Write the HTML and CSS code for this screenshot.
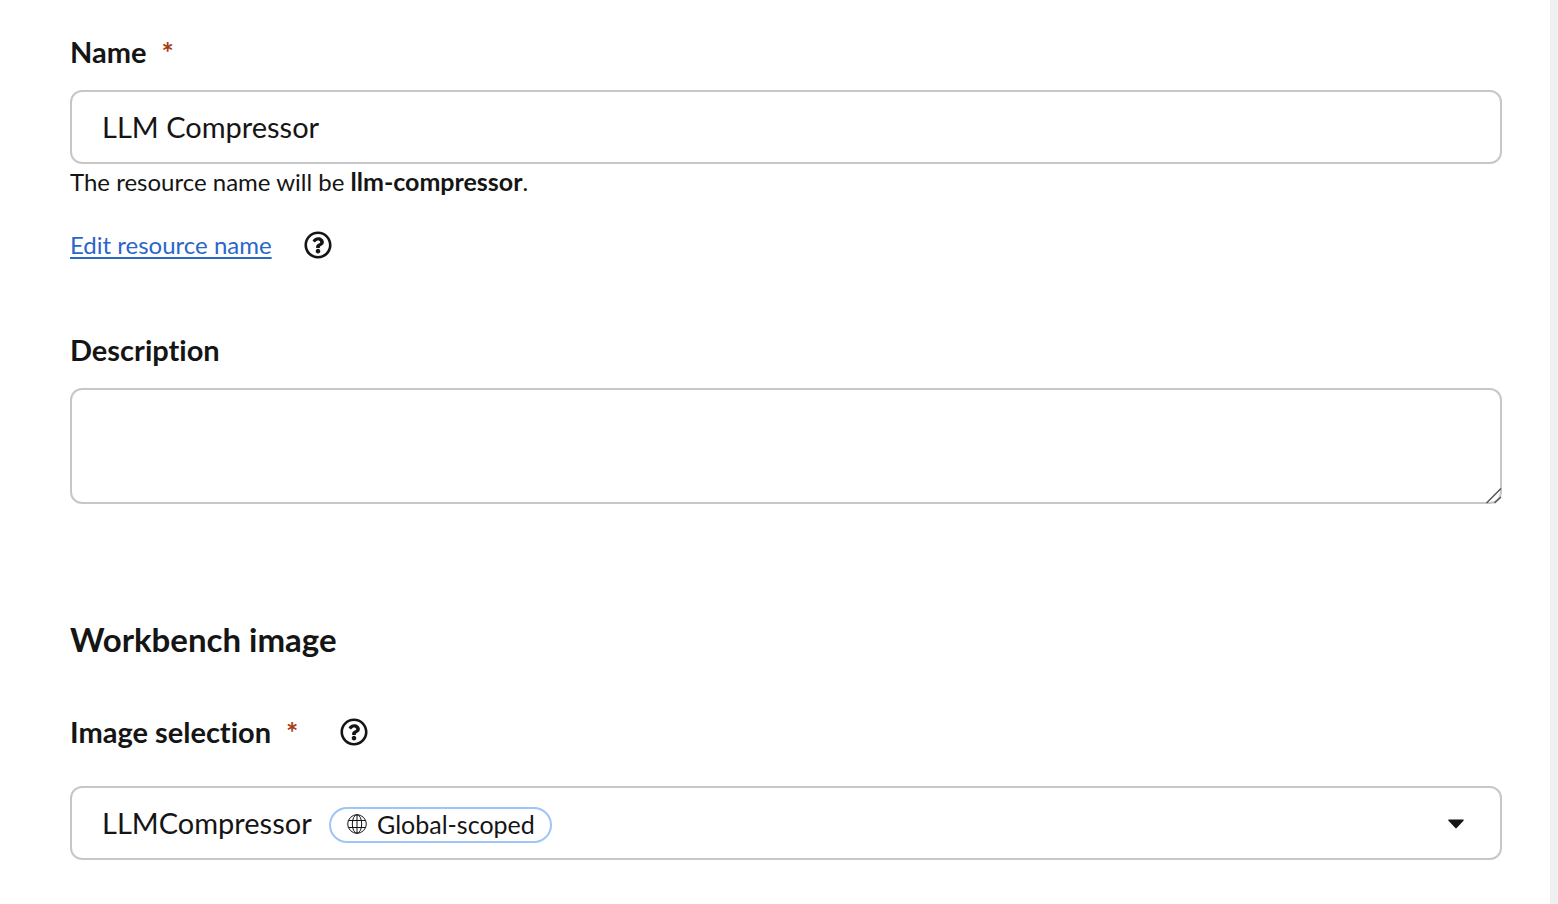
FILE: index.html
```html
<!DOCTYPE html>
<html lang="en">
<head>
<meta charset="utf-8">
<title>Workbench</title>
<link rel="stylesheet" href="styles.css">
</head>
<body>
<svg class="sprite" aria-hidden="true">
  <symbol id="icon-help" viewBox="0 0 512 512">
    <path fill="currentColor" d="M256 8C119 8 8 119.100 8 256c0 137 111 248 248 248s248-111 248-248C504 119.100 393 8 256 8zm0 448c-110.500 0-200-89.400-200-200 0-110.500 89.500-200 200-200 110.500 0 200 89.500 200 200 0 110.500-89.400 200-200 200zm107.200-255.200c0 67.100-72.400 68.100-72.400 92.900V300c0 6.600-5.400 12-12 12h-45.600c-6.600 0-12-5.400-12-12v-8.700c0-35.700 27.100-50 47.600-61.500 17.600-9.800 28.300-16.500 28.300-29.600 0-17.200-22-28.700-39.800-28.700-23.200 0-33.900 11-48.900 30-4.100 5.100-11.500 6.100-16.700 2.100l-27.800-21.100c-5.100-3.900-6.300-11.100-2.600-16.400C184.800 131.500 214.900 112 261.800 112c49 0 101.500 38.300 101.500 88.800zM298 368c0 23.200-18.800 42-42 42s-42-18.800-42-42 18.800-42 42-42 42 18.800 42 42z"/>
  </symbol>
</svg>
<main class="page">
  <form class="form">
    <div class="field">
      <label class="label" for="name">Name <span class="required">*</span></label>
      <input class="control" id="name" type="text" value="LLM Compressor" required>
      <p class="helper">The resource name will be <b class="resource">llm-compressor</b>.</p>
      <div class="edit-row">
        <a class="link" href="#resource-name">Edit resource name</a>
        <button class="help" type="button" aria-label="Resource name help"><svg><use href="#icon-help"/></svg></button>
      </div>
    </div>
    <div class="field">
      <label class="label" for="description">Description</label>
      <div class="textarea-wrap">
        <textarea class="control textarea" id="description"></textarea>
        <svg class="grip" viewBox="0 0 16 16" aria-hidden="true"><path d="M.5 15 15 .5M8.500 15 15 9"/></svg>
      </div>
    </div>
    <section class="section">
      <h2 class="heading">Workbench image</h2>
      <div class="label-row">
        <label class="label" for="image">Image selection <span class="required">*</span></label>
        <button class="help" type="button" aria-label="Image selection help"><svg><use href="#icon-help"/></svg></button>
      </div>
      <div class="select-wrap">
        <select class="control select" id="image"><option>LLMCompressor</option></select>
        <span class="badge">
          <svg class="globe" viewBox="0 0 20 20" aria-hidden="true"><circle cx="10" cy="10" r="9.300"/><ellipse cx="10" cy="10" rx="4.700" ry="9.300"/><path d="M10 .7v18.600M1.500 6.500h17M1.500 13.500h17"/></svg>
          Global-scoped
        </span>
        <svg class="caret" viewBox="0 0 16 10" aria-hidden="true"><path d="M.8.500h14.400q1 .3.300 1.200L8.700 9q-.7.700-1.400 0L.5 1.700Q-.2.800.8.500z"/></svg>
      </div>
    </section>
  </form>
</main>
</body>
</html>
```
FILE: styles.css
```css
* { box-sizing: border-box; }

body {
  margin: 0;
  background: #fff;
  color: #151515;
  font-family: Lato, "Noto Sans", sans-serif;
  font-size: 29px;
  font-variant-ligatures: none;
  line-height: 36px;
}

.sprite { position: absolute; width: 0; height: 0; }

.page {
  min-height: 100vh;
  padding: 34px 48px 44px 70px;
  border-right: 8px solid #f0f0f0;
}

.form, .field, .section { display: flex; flex-direction: column; }
.form { gap: 69px; }

.label { font-weight: 700; }
.required { margin-left: 8px; color: #a63c15; }

.control {
  display: block;
  width: 100%;
  height: 74px;
  margin: 0;
  padding: 0 30px 2px;
  border: 2px solid #c7c7c7;
  border-radius: 12px;
  background: #fff;
  color: inherit;
  font: inherit;
}

.field > .control, .textarea-wrap { margin-top: 20px; }

.helper { margin: 0; font-size: 24px; line-height: 34px; }
.resource { font-size: 25px; }

.edit-row, .label-row { display: flex; align-items: center; }
.edit-row { gap: 32px; margin-top: 28px; font-size: 24px; }
.label-row { gap: 42px; margin-top: 53px; }

.link { color: #2b66c9; text-decoration: underline; text-decoration-thickness: 2px; text-underline-offset: 3px; }

.help { width: 28px; height: 28px; padding: 0; border: 0; background: none; color: inherit; }
.help svg { display: block; width: 28px; height: 28px; }

.textarea-wrap, .select-wrap { position: relative; }
.textarea { height: 116px; padding: 16px 30px; resize: vertical; }
.textarea::-webkit-resizer { background: transparent; }
.grip { position: absolute; right: 0; bottom: 0; width: 16px; height: 16px; fill: none; stroke: #555; stroke-width: 1.5; pointer-events: none; }

.section { margin-top: 44px; }
.heading { margin: 0; font-size: 33px; font-weight: 700; line-height: 44px; }

.select-wrap { margin-top: 36px; }
.select { padding-bottom: 0; appearance: none; }
.badge {
  position: absolute;
  top: 21px;
  left: 259px;
  display: flex;
  align-items: center;
  gap: 10px;
  height: 36px;
  padding: 0 15px 2px 16px;
  border: 2px solid #9ec5f7;
  border-radius: 18px;
  font-size: 25px;
  pointer-events: none;
}
.globe { width: 20px; height: 20px; fill: none; stroke: #151515; stroke-width: 1; }
.caret { position: absolute; top: 33px; right: 38px; width: 16px; height: 10px; fill: #151515; pointer-events: none; }
```
